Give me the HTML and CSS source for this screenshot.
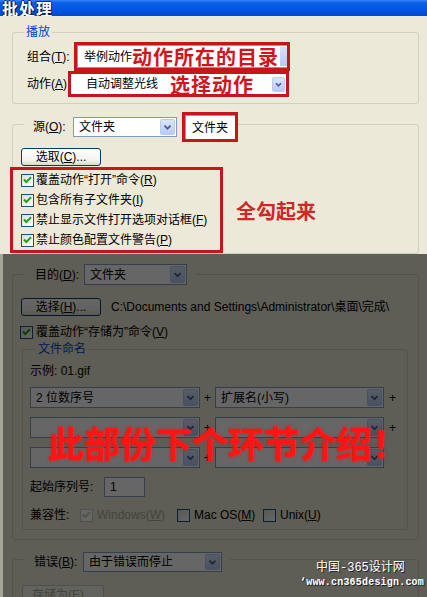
FILE: index.html
```html
<!DOCTYPE html>
<html lang="zh-CN">
<head>
<meta charset="utf-8">
<title>批处理</title>
<link rel="stylesheet" href="styles.css">
</head>
<body>
<div class="window">
  <div class="titlebar">批处理</div>

  <div class="group g-play">
    <div class="legend">播放</div>
    <div class="row r-set">
      <span class="lbl w47">组合(<u>T</u>):</span>
      <div class="anno a-set">
        <div class="fill">
          <span class="val v-set">举例动作</span>
          <span class="note note-in">动作所在的目录</span>
          <span class="arrow-stub"></span>
        </div>
      </div>
    </div>
    <div class="row r-act">
      <span class="lbl w41">动作(<u>A</u>):</span>
      <div class="anno a-act">
        <div class="fill">
          <span class="val v-act">自动调整光线</span>
          <span class="note note-act">选择动作</span>
          <span class="arrow a-small"><svg viewBox="0 0 13 15"><path d="M3.5 6 L6.5 9 L9.5 6" /></svg></span>
        </div>
      </div>
    </div>
  </div>

  <div class="group g-src">
    <div class="head h-src">
      <span class="lbl w40">源(<u>O</u>):</span>
      <div class="combo w104 h20"><span class="val">文件夹</span><span class="arrow"><svg viewBox="0 0 15 16"><path d="M4 6.5 L7.5 10 L11 6.5" /></svg></span></div>
      <div class="anno a-folder"><span class="folder-field">文件夹</span></div>
    </div>
    <button class="btn b-choose" type="button">选取(<u>C</u>)...</button>
    <div class="checks-wrap">
      <div class="anno a-checks">
        <div class="check"><span class="cb"><svg viewBox="0 0 11 11"><path d="M2 4.5 L4.3 7 L9 2.3" /></svg></span><span>覆盖动作“打开”命令(<u>R</u>)</span></div>
        <div class="check"><span class="cb"><svg viewBox="0 0 11 11"><path d="M2 4.5 L4.3 7 L9 2.3" /></svg></span><span>包含所有子文件夹(<u>I</u>)</span></div>
        <div class="check"><span class="cb"><svg viewBox="0 0 11 11"><path d="M2 4.5 L4.3 7 L9 2.3" /></svg></span><span>禁止显示文件打开选项对话框(<u>F</u>)</span></div>
        <div class="check"><span class="cb"><svg viewBox="0 0 11 11"><path d="M2 4.5 L4.3 7 L9 2.3" /></svg></span><span>禁止颜色配置文件警告(<u>P</u>)</span></div>
      </div>
      <span class="note note-all">全勾起来</span>
    </div>
  </div>

  <div class="group g-dest">
    <div class="head h-dest">
      <span class="lbl w49">目的(<u>D</u>):</span>
      <div class="combo w103 h21"><span class="val">文件夹</span><span class="arrow"><svg viewBox="0 0 15 17"><path d="M4 7 L7.5 10.5 L11 7" /></svg></span></div>
    </div>
    <div class="row r-path">
      <button class="btn b-pick" type="button">选择(<u>H</u>)...</button>
      <span class="path">C:\Documents and Settings\Administrator\桌面\完成\</span>
    </div>
    <div class="check r-over"><span class="cb"><svg viewBox="0 0 11 11"><path d="M2 4.5 L4.3 7 L9 2.3" /></svg></span><span>覆盖动作“存储为”命令(<u>V</u>)</span></div>

    <div class="group g-name">
      <div class="legend l-name">文件命名</div>
      <div class="example">示例: 01.gif</div>
      <div class="row r-sel">
        <div class="combo w170 h21"><span class="val">2 位数序号</span><span class="arrow"><svg viewBox="0 0 15 17"><path d="M4 7 L7.5 10.5 L11 7" /></svg></span></div>
        <span class="plus">+</span>
        <div class="combo w169 h21"><span class="val">扩展名(小写)</span><span class="arrow"><svg viewBox="0 0 15 17"><path d="M4 7 L7.5 10.5 L11 7" /></svg></span></div>
        <span class="plus p-end">+</span>
      </div>
      <div class="row r-sel">
        <div class="combo w170 h21"><span class="val"></span><span class="arrow"><svg viewBox="0 0 15 17"><path d="M4 7 L7.5 10.5 L11 7" /></svg></span></div>
        <span class="plus">+</span>
        <div class="combo w169 h21"><span class="val"></span><span class="arrow"><svg viewBox="0 0 15 17"><path d="M4 7 L7.5 10.5 L11 7" /></svg></span></div>
        <span class="plus p-end">+</span>
      </div>
      <div class="row r-sel">
        <div class="combo w170 h21"><span class="val"></span><span class="arrow"><svg viewBox="0 0 15 17"><path d="M4 7 L7.5 10.5 L11 7" /></svg></span></div>
        <span class="plus">+</span>
        <div class="combo w169 h21"><span class="val"></span><span class="arrow"><svg viewBox="0 0 15 17"><path d="M4 7 L7.5 10.5 L11 7" /></svg></span></div>
      </div>
      <div class="row r-start">
        <span class="lbl w74">起始序列号:</span>
        <span class="field">1</span>
      </div>
      <div class="row r-compat">
        <span class="lbl w50">兼容性:</span>
        <div class="opt o-win"><span class="cb dis"><svg viewBox="0 0 11 11"><path d="M2 4.5 L4.3 7 L9 2.3" /></svg></span><span class="dis-txt">Windows(<u>W</u>)</span></div>
        <div class="opt o-mac"><span class="cb off"></span><span>Mac OS(<u>M</u>)</span></div>
        <div class="opt"><span class="cb off"></span><span>Unix(<u>U</u>)</span></div>
      </div>
    </div>
  </div>

  <div class="group g-err">
    <div class="head h-err">
      <span class="lbl w49">错误(<u>B</u>):</span>
      <div class="combo w139 h20"><span class="val">由于错误而停止</span><span class="arrow"><svg viewBox="0 0 15 16"><path d="M4 6.5 L7.5 10 L11 6.5" /></svg></span></div>
    </div>
    <button class="btn b-save" type="button">存储为(<u>E</u>)...</button>
  </div>

  <div class="shade"></div>
  <div class="big-note">此部份下个环节介绍！</div>
  <div class="watermark">
    <div class="wm1">中国-365设计网</div>
    <div class="wm2">‘www.cn365design.com</div>
  </div>
</div>
</body>
</html>
```

FILE: styles.css
```css
* { box-sizing: border-box; }
html, body { margin: 0; padding: 0; }
body {
  width: 427px;
  height: 597px;
  overflow: hidden;
  background: #ece9d8;
  font-family: "Liberation Sans", "Noto Sans CJK SC", sans-serif;
  font-size: 12px;
  line-height: 14px;
  color: #000;
}
u { text-decoration: underline; text-underline-offset: 1px; }

.window {
  position: relative;
  width: 427px;
  height: 597px;
  overflow: hidden;
  background: #ece9d8;
}

.titlebar {
  height: 16px;
  padding-left: 2px;
  background: linear-gradient(#3584f4 0, #0a5ee8 3px, #0055e3 10px, #0048d0 16px);
  color: #fff;
  font: bold 16px/16px "Noto Sans CJK SC", sans-serif;
  letter-spacing: 1px;
  text-shadow: 1px 1px 0 #06154a, -1px 0 0 #0a2470, 0 -1px 0 #0a2470, 1px 0 0 #06154a;
  overflow: hidden;
}

/* group boxes */
.group {
  margin-left: 12px;
  width: 407px;
  border: 1px solid #d0d0bf;
  border-radius: 3px;
}
.legend, .head {
  display: flex;
  align-items: center;
  width: fit-content;
  background: #ece9d8;
}
.legend {
  margin-top: -8px;
  margin-left: 11px;
  padding: 0 2px;
  height: 14px;
  color: #0046d5;
}
.row { display: flex; align-items: center; }
.lbl { white-space: nowrap; flex: none; }
.w40 { width: 40px; }
.w41 { width: 41px; }
.w47 { width: 47px; }
.w49 { width: 49px; }
.w50 { width: 50px; }
.w74 { width: 74px; }

/* combos */
.combo {
  display: flex;
  align-items: center;
  flex: none;
  border: 1px solid #7f9db9;
  background: #fff;
  padding: 1px;
}
.combo .val { flex: 1; padding-left: 4px; white-space: nowrap; overflow: hidden; }
.w103 { width: 103px; }
.w104 { width: 104px; }
.w139 { width: 139px; }
.w169 { width: 169px; }
.w170 { width: 170px; }
.h20 { height: 20px; }
.h21 { height: 21px; }
.arrow {
  flex: none;
  width: 15px;
  height: 100%;
  border: 1px solid #b9cbf3;
  border-radius: 2px;
  background: linear-gradient(#dbe6fd, #b8cbf6);
  display: flex;
}
.h20 .arrow svg, .h21 .arrow svg, .arrow svg { width: 100%; height: 100%; }
.arrow path { fill: none; stroke: #4d6185; stroke-width: 2; }

/* red annotations */
.anno { border: 3px solid #c4161d; flex: none; }
.note {
  color: #d3141c;
  font: bold 20px/21px "Noto Sans CJK SC", sans-serif;
  white-space: nowrap;
}

.g-play { margin-top: 16px; padding-bottom: 6px; }
.r-set { margin-top: 3px; margin-left: 14px; }
.a-set { width: 216px; height: 29px; }
.fill {
  display: flex;
  align-items: center;
  height: 100%;
  background: #fff;
}
.a-set .fill { border: 1px solid #7f9db9; border-right: 0; }
.v-set { padding-left: 6px; width: 54px; flex: none; }
.note-in { letter-spacing: 1px; background: #fff; }
.arrow-stub {
  margin-left: auto;
  width: 7px;
  height: 19px;
  background: linear-gradient(#d3e0fc, #b8cbf6);
}
.r-act { margin-left: 14px; }
.a-act { width: 221px; height: 26px; }
.v-act { padding-left: 15px; flex: none; }
.note-act { margin-left: 12px; letter-spacing: 1px; }
.a-small { width: 13px; height: 15px; margin-left: auto; margin-right: 1px; }

/* source group */
.g-src { margin-top: 20px; }
.h-src {
  margin-top: -13px;
  margin-left: 11px;
  padding-left: 9px;
  height: 30px;
}
.a-folder { margin-left: 5px; width: 56px; height: 30px; }
.folder-field {
  display: flex;
  align-items: center;
  height: 100%;
  padding-left: 6px;
  background: #fff;
  border-top: 1px solid #9a9a90;
  border-left: 1px solid #9a9a90;
}

.btn {
  display: block;
  margin: 0;
  padding: 0;
  height: 18px;
  border: 1px solid #003c74;
  border-radius: 3px;
  background: linear-gradient(#ffffff, #f4f3ee 70%, #dcd8c8);
  font: 12px/14px "Liberation Sans", "Noto Sans CJK SC", sans-serif;
  color: #000;
  text-align: center;
  flex: none;
}
.b-choose { margin-top: 6px; margin-left: 8px; width: 80px; }

.checks-wrap { display: flex; align-items: center; margin-top: 1px; margin-left: -3px; }
.a-checks { width: 213px; height: 86px; }
.check { display: flex; align-items: center; height: 20px; white-space: nowrap; }
.a-checks .check { padding-left: 8px; }
.cb {
  flex: none;
  width: 13px;
  height: 13px;
  margin-right: 2px;
  border: 1px solid #1c5180;
  background: linear-gradient(135deg, #dcdcd7, #ffffff);
  display: flex;
}
.cb svg { width: 100%; height: 100%; }
.cb path { fill: none; stroke: #21a121; stroke-width: 2; }
.cb.dis { border-color: #cac8bb; background: #fff; }
.cb.dis path { stroke: #cac8bb; }
.dis-txt { color: #aca899; }
.note-all { margin-left: 13px; color: #d02828; }

/* destination group (shaded) */
.g-dest { margin-top: 20px; }
.h-dest {
  margin-top: -11px;
  margin-left: 12px;
  padding-left: 10px;
  padding-right: 8px;
  height: 21px;
}
.r-path { margin-top: 13px; margin-left: 8px; }
.b-pick { width: 80px; }
.path { margin-left: 10px; white-space: nowrap; }
.r-over { margin-top: 6px; margin-left: 7px; }
.r-over .cb { margin-right: 3px; }

.g-name {
  margin-top: 7px;
  margin-left: 9px;
  margin-bottom: 9px;
  width: 386px;
  padding-bottom: 4px;
}
.l-name { margin-left: 13px; color: #0046d5; }
.example { margin-top: 8px; margin-left: 7px; height: 14px; }
.r-sel { margin-top: 9px; margin-left: 7px; }
.plus { width: 15px; text-align: center; flex: none; }
.p-end { width: 17px; }
.r-start { margin-top: 9px; margin-left: 7px; }
.field {
  display: flex;
  align-items: center;
  width: 41px;
  height: 20px;
  padding-left: 5px;
  border: 1px solid #7f9db9;
  background: #fff;
}
.r-compat { margin-top: 8px; margin-left: 7px; height: 20px; }
.opt { display: flex; align-items: center; white-space: nowrap; }
.opt .cb { margin-right: 4px; }
.o-win { width: 97px; }
.o-mac { width: 86px; }
.opt .cb.off { background: linear-gradient(135deg, #dcdcd7, #ffffff); }

/* error group */
.g-err { margin-top: 19px; height: 80px; }
.h-err {
  margin-top: -8px;
  margin-left: 12px;
  padding-left: 9px;
  padding-right: 8px;
  height: 20px;
}
.b-save {
  margin-top: 13px;
  margin-left: 9px;
  width: 82px;
  height: 19px;
  border-color: #c9c7ba;
  color: #aca899;
  background: #f5f4ea;
}

/* overlays */
.shade {
  position: absolute;
  left: 0;
  right: 0;
  top: 254px;
  bottom: 0;
  background: rgba(0, 0, 0, 0.6);
  background-clip: padding-box;
  border-left: 3px solid rgba(0, 0, 0, 0.3);
}
.big-note {
  position: absolute;
  left: 48px;
  top: 424px;
  color: #ff1414;
  font: bold 36px/36px "Noto Sans CJK SC", sans-serif;
  white-space: nowrap;
  text-shadow: 0 0 2px rgba(255, 20, 20, 0.8), 0 0 4px rgba(255, 0, 0, 0.35);
}
.watermark {
  position: absolute;
  left: 300px;
  top: 561px;
  color: #fff;
  text-shadow: 1px 1px 0 #222;
}
.wm1 {
  margin-left: 16px;
  font: 12px/15px "Liberation Mono", "Noto Sans CJK SC", monospace;
  letter-spacing: 0;
}
.wm2 {
  font: bold 10px/13px "Liberation Mono", monospace;
  letter-spacing: 0.2px;
}
```
